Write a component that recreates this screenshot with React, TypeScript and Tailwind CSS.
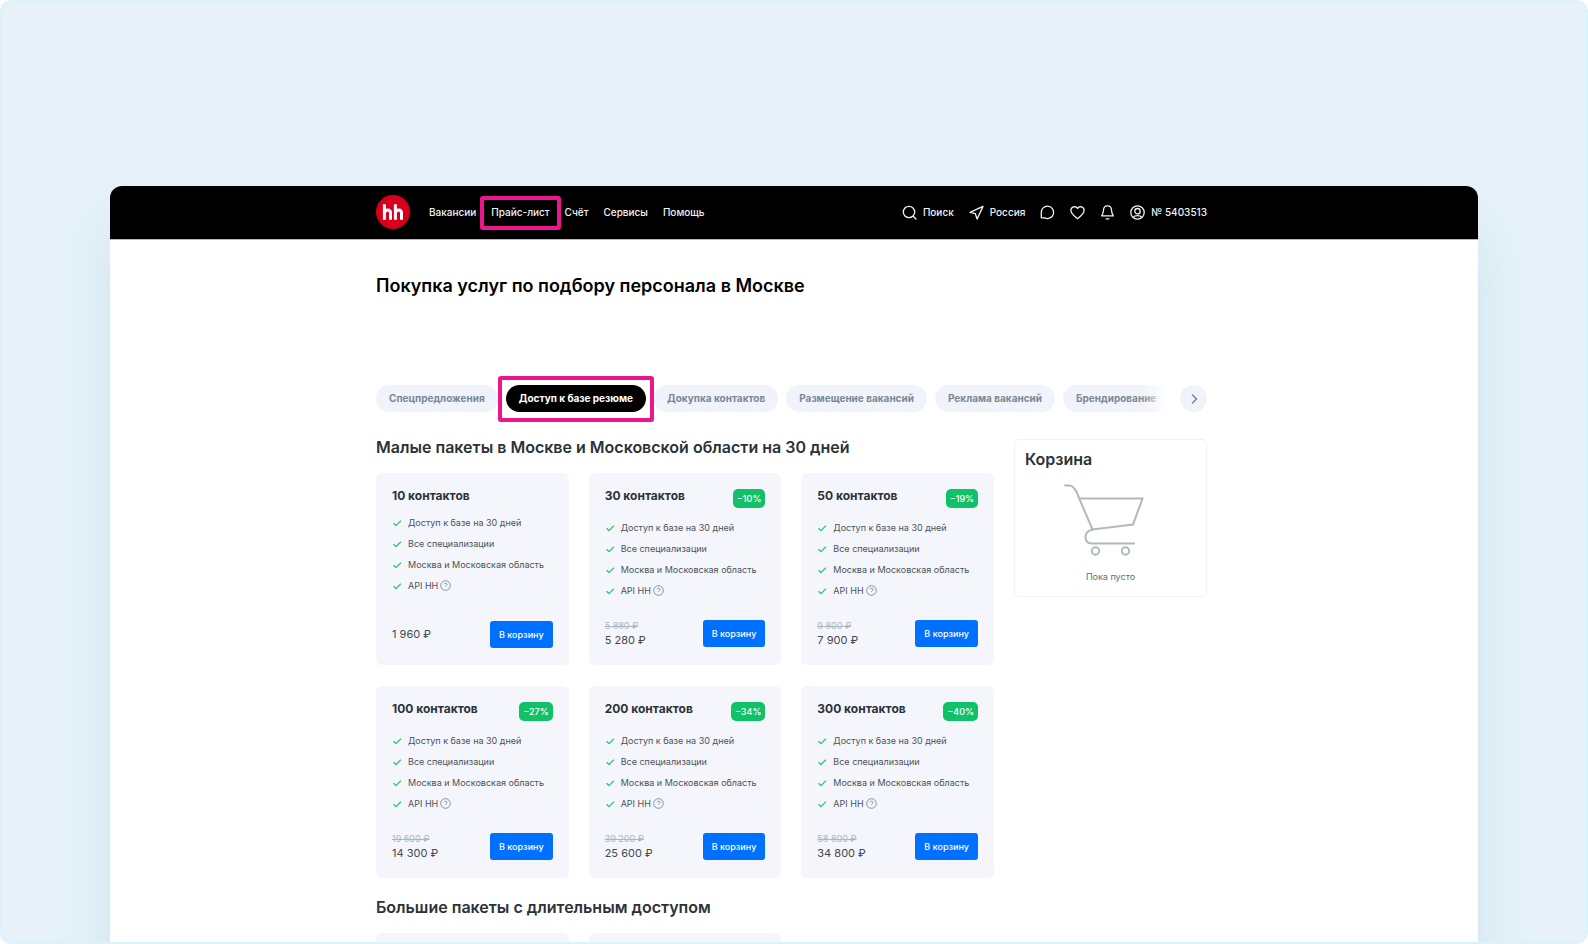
import React from "react";

type Pack = { title: string; discount?: string; oldPrice?: string; price: string };

const packs: Pack[] = [
  { title: "10 контактов", price: "1 960 ₽" },
  { title: "30 контактов", discount: "−10%", oldPrice: "5 880 ₽", price: "5 280 ₽" },
  { title: "50 контактов", discount: "−19%", oldPrice: "9 800 ₽", price: "7 900 ₽" },
  { title: "100 контактов", discount: "−27%", oldPrice: "19 600 ₽", price: "14 300 ₽" },
  { title: "200 контактов", discount: "−34%", oldPrice: "39 200 ₽", price: "25 600 ₽" },
  { title: "300 контактов", discount: "−40%", oldPrice: "58 800 ₽", price: "34 800 ₽" },
];

const features = ["Доступ к базе на 30 дней", "Все специализации", "Москва и Московская область", "API HH"];

const nav = ["Вакансии", "Прайс-лист", "Счёт", "Сервисы", "Помощь"];

const tabs = [
  "Спецпредложения",
  "Доступ к базе резюме",
  "Докупка контактов",
  "Размещение вакансий",
  "Реклама вакансий",
  "Брендирование",
];

function Icon({ children }: { children: React.ReactNode }) {
  return (
    <svg
      viewBox="0 0 15 15"
      className="size-[15px] shrink-0"
      fill="none"
      stroke="currentColor"
      strokeWidth="1.3"
      strokeLinecap="round"
      strokeLinejoin="round"
      aria-hidden="true"
    >
      {children}
    </svg>
  );
}

function Header() {
  return (
    <header className="border-b border-[#b9b9b9] bg-black pr-[5px] pb-px text-[10px] leading-4 font-medium text-[#f2f2f2]">
      <div className="mx-auto flex h-[52px] max-w-[831px] items-center">
        <a href="#home" aria-label="hh">
          <svg viewBox="0 0 34 34" className="size-[34px]" aria-hidden="true">
            <circle cx="17" cy="17" r="17" fill="#d6001c" />
            <g fill="none" stroke="#fff" strokeWidth="3">
              <path d="M8.400 9.300V24.700M8.400 18.500C8.600 15.800 10 14.900 11.700 14.900C13.700 14.900 14.500 16 14.500 18V24.700" />
              <path d="M19.400 9.300V24.700M19.400 18.500C19.600 15.800 21 14.900 22.700 14.900C24.700 14.900 25.500 16 25.500 18V24.700" />
            </g>
          </svg>
        </a>
        <nav className="ml-[19px] flex gap-[15px]">
          {nav.map((item) => (
            <a key={item} href="#nav" className="relative">
              {item}
              {item === "Прайс-лист" && (
                <span className="pointer-events-none absolute -inset-x-[11px] -top-2 -bottom-[10px] rounded-[3px] border-4 border-[#ec168c]" />
              )}
            </a>
          ))}
        </nav>
        <div className="ml-auto flex items-center gap-[15px]">
          <button className="flex items-center gap-[6px]">
            <Icon>
              <circle cx="7" cy="7" r="5.7" />
              <path d="M11.2 11.2L14 14" />
            </Icon>
            Поиск
          </button>
          <button className="flex items-center gap-[6px]">
            <Icon>
              <path d="M14 1.4L1 7.4L6.3 8.7L8.1 14Z" />
            </Icon>
            Россия
          </button>
          <button aria-label="Чаты">
            <Icon>
              <path d="M7.6 1.1a6.2 6.2 0 1 1-3 11.7H1.3V7.4a6.2 6.2 0 0 1 6.3-6.3Z" />
            </Icon>
          </button>
          <button aria-label="Избранное">
            <Icon>
              <path d="M7.5 13.6C5.3 12 .9 8.9.9 5.3A3.6 3.6 0 0 1 7.5 3.4A3.6 3.6 0 0 1 14.1 5.3C14.1 8.9 9.700 12 7.500 13.600Z" />
            </Icon>
          </button>
          <button aria-label="Уведомления">
            <Icon>
              <path d="M7.500.9C5 .9 3.600 2.600 3.500 5C3.400 8 2.800 9 1.700 10.900H13.300C12.200 9 11.600 8 11.500 5C11.400 2.600 10 .9 7.500.9ZM6.200 13.900H8.800" />
            </Icon>
          </button>
          <button className="flex items-center gap-[6px]">
            <Icon>
              <circle cx="7.5" cy="7.5" r="6.7" />
              <circle cx="7.5" cy="6.2" r="2.700" />
              <path d="M3.200 12.300C4.200 10.900 5.700 10.600 7.500 10.600S10.800 10.900 11.800 12.300" />
            </Icon>
            № 5403513
          </button>
        </div>
      </div>
    </header>
  );
}

function Tabs() {
  return (
    <div className="mt-[85px] flex items-center justify-between">
      <div className="relative flex gap-2 text-[10px] leading-[27px] font-bold whitespace-nowrap">
        {tabs.map((tab) =>
          tab === "Доступ к базе резюме" ? (
            <button key={tab} className="relative z-10 rounded-full bg-black px-[13px] text-white">
              {tab}
              <span className="pointer-events-none absolute -inset-x-2 -top-[9px] -bottom-[10px] rounded-[3px] border-4 border-[#ec168c]" />
            </button>
          ) : (
            <button key={tab} className="rounded-full bg-[#f0f3f9] px-[13px] text-[#7b8896]">
              {tab}
            </button>
          ),
        )}
        <span className="pointer-events-none absolute inset-y-0 right-0 w-7 bg-linear-to-r from-white/0 to-white" />
      </div>
      <button
        aria-label="Дальше"
        className="flex size-[27px] shrink-0 items-center justify-center rounded-full bg-[#f0f3f9] text-[#7b8896]"
      >
        <svg viewBox="0 0 10 12" className="h-3 w-[10px]" fill="none" stroke="currentColor" strokeWidth="1.5" aria-hidden="true">
          <path d="M3 1.500L7.500 6L3 10.500" />
        </svg>
      </button>
    </div>
  );
}

function PackCard({ pack }: { pack: Pack }) {
  return (
    <article className="flex min-h-[192px] flex-col rounded-md bg-[#f4f6fc] px-4 pt-[13px] pb-[17px]">
      <div className="flex items-start justify-between">
        <h3 className="text-[12px] leading-5 font-bold text-[#2b3238]">{pack.title}</h3>
        {pack.discount && (
          <span className="my-[3px] rounded-[5px] bg-[#10c168] px-1 text-[9px] leading-[19px] font-medium text-white">
            {pack.discount}
          </span>
        )}
      </div>
      <ul className="mt-[6px] text-[9px] leading-[21px] text-[#4b5258]">
        {features.map((f) => (
          <li key={f} className="flex items-center gap-[6px] whitespace-nowrap">
            <svg viewBox="0 0 10 10" className="size-[10px] shrink-0" fill="none" stroke="#2fc77c" strokeWidth="1.300" aria-hidden="true">
              <path d="M1.500 5.300L4 7.600L8.900 2.700" />
            </svg>
            <span>{f}</span>
            {f === "API HH" && (
              <svg viewBox="0 0 11 11" className="-ml-1 size-[11px] shrink-0" fill="none" stroke="#8492a0" aria-hidden="true">
                <circle cx="5.500" cy="5.500" r="4.800" />
                <path d="M3.900 4.200C4.200 2.900 7.100 2.900 7.100 4.500C7.100 5.500 5.600 5.500 5.600 6.800" />
              </svg>
            )}
          </li>
        ))}
      </ul>
      <div className="mt-auto flex items-center justify-between">
        <div>
          {pack.oldPrice && <s className="block text-[9px] leading-[14px] text-[#a9b7c4]">{pack.oldPrice}</s>}
          <div className="text-[11px] leading-[15px] text-[#43494f]">{pack.price}</div>
        </div>
        <button className="rounded-[3px] bg-[#0070ff] px-[9px] text-[9px] leading-[27px] font-medium text-white">В корзину</button>
      </div>
    </article>
  );
}

function Cart() {
  return (
    <aside className="mt-1 flex h-[158px] w-[193px] shrink-0 flex-col rounded-[5px] border border-[#f0f2f8] px-[10px] pt-[7px]">
      <h2 className="text-[16px] leading-6 font-semibold text-[#2b3238]">Корзина</h2>
      <svg
        viewBox="0 0 80 74"
        className="mt-3 ml-[39px] h-[74px] w-20"
        fill="none"
        stroke="#afb9bf"
        strokeWidth="2"
        strokeLinecap="round"
        aria-hidden="true"
      >
        <path d="M1 2.500H5C9 2.500 10.500 5 12.300 8.500C14.500 13 16 18 18 22L28.500 46.500L69 41.500L78.500 15.500H16" />
        <path d="M28.500 46.500C24 47.500 21.500 50 21.500 54C21.500 58 24 60.500 28 60.500H70" />
        <circle cx="31.500" cy="68" r="3.700" />
        <circle cx="61.500" cy="68" r="3.700" />
      </svg>
      <p className="mt-3 text-center text-[9px] leading-4 text-[#666d73]">Пока пусто</p>
    </aside>
  );
}

export default function App() {
  return (
    <div className="h-screen overflow-hidden rounded-xl border-2 border-[#daf2fb] bg-[#e6f2f8] px-27 pt-46 font-['Inter','Liberation_Sans',sans-serif]">
      <div className="min-h-full overflow-hidden rounded-t-xl bg-white shadow-[0_40px_60px_rgba(80,150,200,0.15)]">
        <Header />
        <main className="pr-[5px]">
          <div className="mx-auto max-w-[831px] pb-10">
            <h1 className="mt-8 text-[18px] leading-7 font-semibold text-black">Покупка услуг по подбору персонала в Москве</h1>
            <Tabs />
            <div className="mt-[23px] flex items-start gap-5">
              <div className="min-w-0 flex-1">
                <h2 className="text-[16px] leading-6 font-semibold text-[#2b3238]">
                  Малые пакеты в Москве и Московской области на 30 дней
                </h2>
                <div className="mt-[14px] grid grid-cols-3 gap-x-5 gap-y-[21px]">
                  {packs.map((p) => (
                    <PackCard key={p.title} pack={p} />
                  ))}
                </div>
                <h2 className="mt-[17px] text-[16px] leading-6 font-semibold text-[#2b3238]">Большие пакеты с длительным доступом</h2>
                <div className="mt-[14px] grid grid-cols-3 gap-x-5">
                  <div className="h-[192px] rounded-md bg-[#f4f6fc]" />
                  <div className="h-[192px] rounded-md bg-[#f4f6fc]" />
                </div>
              </div>
              <Cart />
            </div>
          </div>
        </main>
      </div>
    </div>
  );
}
